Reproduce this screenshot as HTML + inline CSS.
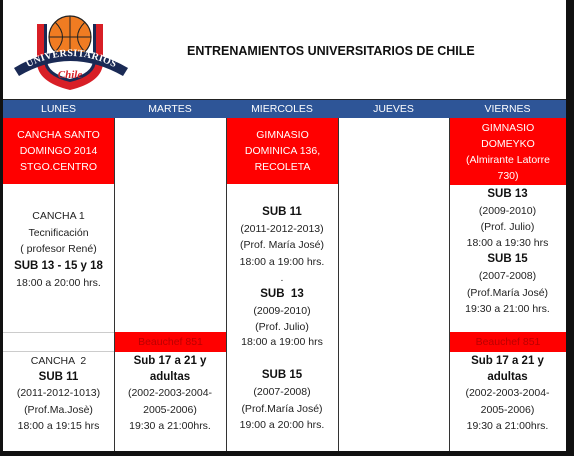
<!DOCTYPE html>
<html><head><meta charset="utf-8"><style>
*{margin:0;padding:0;box-sizing:border-box}
body{width:574px;height:456px;background:#fff;position:relative;overflow:hidden;font-family:"Liberation Sans",Arial,sans-serif;font-size:10.5px;color:#222}
.a{position:absolute}
.l{position:absolute;text-align:center;height:16px;line-height:16px;white-space:nowrap}
.b{font-weight:bold;font-size:11.5px;color:#111}
.hd{position:absolute;top:100px;height:18px;line-height:18px;color:#fff;text-align:center;font-size:10.5px}
.red{position:absolute;background:#f00;color:#fff;text-align:center;font-size:10.5px;line-height:16px}
.v{position:absolute;top:118px;bottom:5px;width:1px;background:#333}
</style></head><body>
<div class="a" style="left:0;top:0;width:3px;height:456px;background:#111"></div>
<div class="a" style="left:566px;top:0;width:8px;height:456px;background:#111"></div>
<div class="a" style="left:0;top:451px;width:574px;height:5px;background:#111"></div>

<svg class="a" style="left:10px;top:0" width="130" height="95" viewBox="0 0 130 95">
<path d="M27 24 L93 24 L93 62 Q93 82 60 90 Q27 82 27 62 Z" fill="#d81f26"/>
<path d="M34 24 L86 24 L86 60 Q86 76 60 82 Q34 76 34 60 Z" fill="#1a2a55"/>
<path d="M37 24 L83 24 L83 60 Q83 73 60 79 Q37 73 37 60 Z" fill="#fff"/>
<circle cx="60" cy="37" r="21" fill="#f07c22" stroke="#222" stroke-width="1.2"/>
<path d="M39 37 H81 M60 16 V58 M45 22 Q60 37 45 52 M75 22 Q60 37 75 52" fill="none" stroke="#222" stroke-width="1"/>
<path d="M4 68 Q60 34 118 68 L113 76 Q60 46 9 76 Z" fill="#1a2a55"/>
<defs><path id="arc" d="M10 72 Q60 40 113 72"/></defs>
<text font-family="Liberation Serif" font-size="10" font-weight="bold" fill="#fff" letter-spacing="0.3"><textPath href="#arc" startOffset="50%" text-anchor="middle">UNIVERSITARIOS</textPath></text>
<text x="60" y="78" font-family="Liberation Serif" font-size="11" font-style="italic" font-weight="bold" fill="#d81f26" text-anchor="middle">Chile</text>
</svg>

<div class="a" style="left:187px;top:44px;font-size:12.5px;font-weight:bold;color:#111">ENTRENAMIENTOS UNIVERSITARIOS DE CHILE</div>

<div class="a" style="left:3px;top:99px;width:563px;height:1px;background:#222"></div>
<div class="a" style="left:3px;top:100px;width:563px;height:18px;background:#2e5597"></div>
<div class="hd" style="left:3px;width:111px">LUNES</div>
<div class="hd" style="left:114px;width:112px">MARTES</div>
<div class="hd" style="left:226px;width:112px">MIERCOLES</div>
<div class="hd" style="left:338px;width:111px">JUEVES</div>
<div class="hd" style="left:449px;width:117px">VIERNES</div>

<div class="v" style="left:114px"></div>
<div class="v" style="left:226px"></div>
<div class="v" style="left:338px"></div>
<div class="v" style="left:449px"></div>

<div class="red" style="left:3px;top:118px;width:111px;height:66px;padding-top:9px">CANCHA SANTO<br>DOMINGO 2014<br>STGO.CENTRO</div>
<div class="red" style="left:227px;top:118px;width:111px;height:66px;padding-top:9px">GIMNASIO<br>DOMINICA 136,<br>RECOLETA</div>
<div class="red" style="left:450px;top:118px;width:116px;height:67px;padding-top:2px">GIMNASIO<br>DOMEYKO<br>(Almirante Latorre<br>730)</div>

<div class="a" style="left:3px;top:332px;width:111px;height:1px;background:#ccc"></div>
<div class="a" style="left:3px;top:351px;width:111px;height:1px;background:#ccc"></div>
<div class="red" style="left:115px;top:332px;width:111px;height:20px;line-height:20px;color:#b00">Beauchef 851</div>
<div class="red" style="left:450px;top:332px;width:116px;height:20px;line-height:20px;color:#b00">Beauchef 851</div>

<div class="l" style="left:3px;width:111px;top:208px">CANCHA 1</div>
<div class="l" style="left:3px;width:111px;top:225px">Tecnificación</div>
<div class="l" style="left:3px;width:111px;top:241px">( profesor René)</div>
<div class="l b" style="left:3px;width:111px;top:258px">SUB 13 - 15 y 18</div>
<div class="l" style="left:3px;width:111px;top:275px">18:00 a 20:00 hrs.</div>
<div class="l" style="left:3px;width:111px;top:353px">CANCHA &nbsp;2</div>
<div class="l b" style="left:3px;width:111px;top:369px">SUB 11</div>
<div class="l" style="left:3px;width:111px;top:385px">(2011-2012-1013)</div>
<div class="l" style="left:3px;width:111px;top:402px">(Prof.Ma.Josè)</div>
<div class="l" style="left:3px;width:111px;top:418px">18:00 a 19:15 hrs</div>

<div class="l b" style="left:114px;width:112px;top:353px">Sub 17 a 21 y</div>
<div class="l b" style="left:114px;width:112px;top:369px">adultas</div>
<div class="l" style="left:114px;width:112px;top:385px">(2002-2003-2004-</div>
<div class="l" style="left:114px;width:112px;top:402px">2005-2006)</div>
<div class="l" style="left:114px;width:112px;top:418px">19:30 a 21:00hrs.</div>

<div class="l b" style="left:226px;width:112px;top:204px">SUB 11</div>
<div class="l" style="left:226px;width:112px;top:221px">(2011-2012-2013)</div>
<div class="l" style="left:226px;width:112px;top:237px">(Prof. María José)</div>
<div class="l" style="left:226px;width:112px;top:254px">18:00 a 19:00 hrs.</div>
<div class="l" style="left:226px;width:112px;top:270px">.</div>
<div class="l b" style="left:226px;width:112px;top:286px">SUB &nbsp;13</div>
<div class="l" style="left:226px;width:112px;top:303px">(2009-2010)</div>
<div class="l" style="left:226px;width:112px;top:319px">(Prof. Julio)</div>
<div class="l" style="left:226px;width:112px;top:334px">18:00 a 19:00 hrs</div>
<div class="l b" style="left:226px;width:112px;top:367px">SUB 15</div>
<div class="l" style="left:226px;width:112px;top:384px">(2007-2008)</div>
<div class="l" style="left:226px;width:112px;top:401px">(Prof.María José)</div>
<div class="l" style="left:226px;width:112px;top:417px">19:00 a 20:00 hrs.</div>

<div class="l b" style="left:449px;width:117px;top:186px">SUB 13</div>
<div class="l" style="left:449px;width:117px;top:203px">(2009-2010)</div>
<div class="l" style="left:449px;width:117px;top:219px">(Prof. Julio)</div>
<div class="l" style="left:449px;width:117px;top:235px">18:00 a 19:30 hrs</div>
<div class="l b" style="left:449px;width:117px;top:251px">SUB 15</div>
<div class="l" style="left:449px;width:117px;top:268px">(2007-2008)</div>
<div class="l" style="left:449px;width:117px;top:285px">(Prof.María José)</div>
<div class="l" style="left:449px;width:117px;top:301px">19:30 a 21:00 hrs.</div>
<div class="l b" style="left:449px;width:117px;top:353px">Sub 17 a 21 y</div>
<div class="l b" style="left:449px;width:117px;top:369px">adultas</div>
<div class="l" style="left:449px;width:117px;top:385px">(2002-2003-2004-</div>
<div class="l" style="left:449px;width:117px;top:402px">2005-2006)</div>
<div class="l" style="left:449px;width:117px;top:418px">19:30 a 21:00hrs.</div>
</body></html>
